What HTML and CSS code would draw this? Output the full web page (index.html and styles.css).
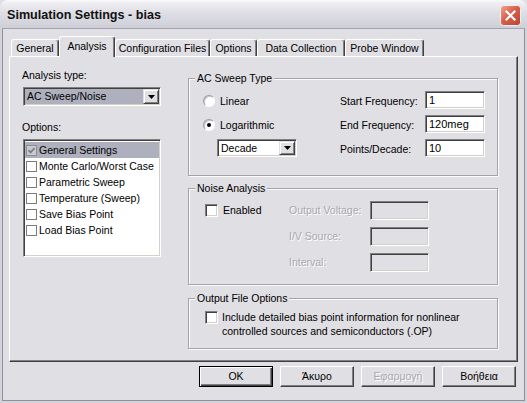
FILE: index.html
```html
<!DOCTYPE html>
<html>
<head>
<meta charset="utf-8">
<title>Simulation Settings - bias</title>
<link rel="stylesheet" href="styles.css">
</head>
<body>
<div class="window">
  <div class="titlebar">
    <span class="title">Simulation Settings - bias</span>
    <span class="close">
      <svg width="21" height="21" viewBox="0 0 21 21">
        <defs>
          <linearGradient id="cg" x1="0" y1="0" x2="1" y2="1">
            <stop offset="0" stop-color="#f2a696"/>
            <stop offset="0.45" stop-color="#d9604c"/>
            <stop offset="1" stop-color="#b9402e"/>
          </linearGradient>
        </defs>
        <rect x="0.5" y="0.5" width="20" height="20" rx="3" fill="url(#cg)" stroke="#f4f4f4"/>
        <path d="M6.5 6.5 L14.5 14.5 M14.5 6.5 L6.5 14.5" stroke="#fff" stroke-width="2.2" stroke-linecap="square"/>
      </svg>
    </span>
  </div>
  <div class="client">
    <div class="tabs">
      <div class="tab t-general">General</div>
      <div class="tab t-analysis active">Analysis</div>
      <div class="tab t-config">Configuration Files</div>
      <div class="tab t-options">Options</div>
      <div class="tab t-data">Data Collection</div>
      <div class="tab t-probe">Probe Window</div>
    </div>
    <div class="panel">
      <div class="left">
        <div class="label">Analysis type:</div>
        <div class="select analysis-select">
          <span class="select-text">AC Sweep/Noise</span>
          <span class="drop"><svg width="7" height="4" viewBox="0 0 7 4"><polygon points="0,0 7,0 3.5,4" fill="#000"/></svg></span>
        </div>
        <div class="label options-label">Options:</div>
        <div class="listbox">
          <div class="item selected"><span class="lcb checked"><svg width="9" height="9" viewBox="0 0 9 9"><path d="M1.5 4.2 L3.6 6.4 L7.6 2.2" fill="none" stroke="#7c7c8c" stroke-width="1.7"/></svg></span>General Settings</div>
          <div class="item"><span class="lcb"></span>Monte Carlo/Worst Case</div>
          <div class="item"><span class="lcb"></span>Parametric Sweep</div>
          <div class="item"><span class="lcb"></span>Temperature (Sweep)</div>
          <div class="item"><span class="lcb"></span>Save Bias Point</div>
          <div class="item"><span class="lcb"></span>Load Bias Point</div>
        </div>
      </div>
      <div class="right">
        <div class="group ac-group">
          <div class="group-title">AC Sweep Type</div>
          <div class="ac-grid">
            <div class="radio-row"><span class="radio"></span>Linear</div>
            <div class="flabel">Start Frequency:</div>
            <div class="input">1</div>
            <div class="radio-row"><span class="radio on"></span>Logarithmic</div>
            <div class="flabel">End Frequency:</div>
            <div class="input">120meg</div>
            <div class="select decade-select">
              <span class="select-text">Decade</span>
              <span class="drop"><svg width="7" height="4" viewBox="0 0 7 4"><polygon points="0,0 7,0 3.5,4" fill="#000"/></svg></span>
            </div>
            <div class="flabel">Points/Decade:</div>
            <div class="input">10</div>
          </div>
        </div>
        <div class="group noise-group">
          <div class="group-title">Noise Analysis</div>
          <div class="noise-grid">
            <div class="check-row"><span class="check"></span>Enabled</div>
            <div class="dlabel">Output Voltage:</div>
            <div class="input disabled"></div>
            <div></div>
            <div class="dlabel">I/V Source:</div>
            <div class="input disabled"></div>
            <div></div>
            <div class="dlabel">Interval:</div>
            <div class="input disabled"></div>
          </div>
        </div>
        <div class="group out-group">
          <div class="group-title">Output File Options</div>
          <div class="out-row">
            <span class="check"></span>
            <span class="out-text">Include detailed bias point information for nonlinear<br>controlled sources and semiconductors (.OP)</span>
          </div>
        </div>
      </div>
    </div>
    <div class="buttons">
      <div class="btn default"><span class="btn-inner">OK</span></div>
      <div class="btn"><span class="btn-inner">Άκυρο</span></div>
      <div class="btn"><span class="btn-inner btn-disabled">Εφαρμογή</span></div>
      <div class="btn"><span class="btn-inner">Βοήθεια</span></div>
    </div>
  </div>
</div>
</body>
</html>
```

FILE: styles.css
```css
html, body {
  margin: 0;
  padding: 0;
  background: #e0dfe3;
}

body {
  width: 527px;
  height: 403px;
  overflow: hidden;
  font-family: "Liberation Sans", Arial, sans-serif;
  font-size: 10.5px;
  line-height: 13px;
  color: #000;
}

.window {
  width: 527px;
  height: 403px;
  box-sizing: border-box;
  display: flex;
  flex-direction: column;
  background: #d3d3db;
  border-radius: 7px 7px 0 0;
  padding: 0 2px 2px 2px;
  overflow: hidden;
}

.titlebar {
  height: 28px;
  flex: none;
  margin: 0 -2px;
  box-sizing: border-box;
  padding: 2px 6px 0 7px;
  display: flex;
  align-items: center;
  justify-content: space-between;
  background: linear-gradient(#fbfbfc 0, #eeeef2 3px, #dedee5 45%, #cfcfd8 100%);
  border-radius: 7px 7px 0 0;
}

.title {
  font-weight: bold;
  font-size: 12.6px;
  color: #111;
}

.close {
  display: flex;
  width: 21px;
  height: 21px;
}

.client {
  flex: 1;
  background: #e0dfe3;
  border: 1px solid #8f8f9f;
  border-top-color: #a3a3b1;
  padding: 7px 6px 0 6px;
  display: flex;
  flex-direction: column;
}

/* Tabs */
.tabs {
  display: flex;
  align-items: flex-end;
  height: 20px;
  padding-left: 2px;
  flex: none;
}

.tab {
  height: 17px;
  box-sizing: border-box;
  border-top: 1px solid #fff;
  border-left: 1px solid #fff;
  border-right: 1px solid #404040;
  box-shadow: inset -1px 0 0 #808080;
  border-radius: 3px 3px 0 0;
  line-height: 16px;
  white-space: nowrap;
  text-align: center;
}

.t-general { width: 48px; }
.t-analysis { width: 56px; }
.t-config { width: 95px; }
.t-options { width: 47px; }
.t-data { width: 88px; }
.t-probe { width: 79px; }

.tab.active {
  height: 21px;
  margin-bottom: -1px;
  background: #e0dfe3;
  line-height: 18px;
  position: relative;
  z-index: 2;
}

/* Panel */
.panel {
  height: 306px;
  flex: none;
  box-sizing: border-box;
  border: 1px solid;
  border-color: #fff #404040 #404040 #fff;
  box-shadow: inset -1px -1px 0 #808080;
  padding: 12px 0 0 13px;
  display: grid;
  grid-template-columns: 138px 310px;
  column-gap: 27px;
  align-items: start;
}

.left {
  display: flex;
  flex-direction: column;
}

.label {
  margin-left: -1px;
  height: 13px;
}

.options-label {
  margin-top: 15px;
}

/* Select */
.select {
  display: flex;
  box-sizing: border-box;
  height: 19px;
  border: 1px solid;
  border-color: #808080 #fff #fff #808080;
  box-shadow: inset 1px 1px 0 #404040, inset -1px -1px 0 #d4d0c8;
  background: #fff;
  padding: 1px;
}

.analysis-select {
  margin-top: 5px;
  background: #afb0bd;
}

.select-text {
  flex: 1;
  padding-left: 2px;
  line-height: 15px;
}

.drop {
  width: 16px;
  box-sizing: border-box;
  background: #e0dfe3;
  border: 1px solid;
  border-color: #e0dfe3 #404040 #404040 #e0dfe3;
  box-shadow: inset 1px 1px 0 #fff, inset -1px -1px 0 #808080;
  display: flex;
  align-items: center;
  justify-content: center;
}

.decade-select {
  width: 80px;
  height: 18px;
  margin-left: 14px;
  align-self: center;
}

.decade-select .select-text {
  line-height: 14px;
}

/* Listbox */
.listbox {
  margin-top: 5px;
  height: 118px;
  box-sizing: border-box;
  border: 1px solid;
  border-color: #808080 #fff #fff #808080;
  box-shadow: inset 1px 1px 0 #404040, inset -1px -1px 0 #d4d0c8;
  background: #fff;
  padding: 2px 1px;
}

.item {
  height: 16px;
  display: flex;
  align-items: center;
  gap: 2px;
  white-space: nowrap;
  padding-left: 1px;
}

.item.selected {
  background: #afb0bd;
}

.lcb {
  width: 11px;
  height: 11px;
  box-sizing: border-box;
  border: 1px solid #7b7b7b;
  background: #fff;
  display: flex;
  align-items: center;
  justify-content: center;
  flex: none;
}

.lcb.checked {
  background: #c9c9d2;
  border-color: #8c8c98;
}

/* Group boxes */
.right {
  display: flex;
  flex-direction: column;
}

.group {
  box-sizing: border-box;
  border: 1px solid #a3a3ab;
  box-shadow: inset 1px 1px 0 #fbfbfb, 1px 1px 0 #fbfbfb;
}

.group-title {
  width: max-content;
  margin: -7px 0 0 6px;
  padding: 0 2px;
  background: #e0dfe3;
  height: 13px;
}

.ac-group {
  margin-top: 9px;
  height: 98px;
}

.ac-grid {
  margin: 3px 0 0 14px;
  display: grid;
  grid-template-columns: 137px 85px 60px;
  grid-auto-rows: 24px;
  align-items: center;
}

.radio-row {
  display: flex;
  align-items: center;
  gap: 5px;
  padding-top: 2px;
}

.radio {
  width: 12px;
  height: 12px;
  box-sizing: border-box;
  border-radius: 50%;
  border: 1px solid;
  border-color: #9a9aa2 #fff #fff #9a9aa2;
  box-shadow: inset 1px 1px 0 #c4c4cc;
  background: #fff;
  display: flex;
  align-items: center;
  justify-content: center;
}

.radio.on::after {
  content: "";
  width: 4px;
  height: 4px;
  border-radius: 50%;
  background: #000;
}

.flabel {
  padding-top: 3px;
}

.input {
  height: 18px;
  box-sizing: border-box;
  border: 1px solid;
  border-color: #808080 #fff #fff #808080;
  box-shadow: inset 1px 1px 0 #404040, inset -1px -1px 0 #d4d0c8;
  background: #fff;
  padding: 1px 3px;
  line-height: 15px;
  font-size: 11px;
}

.input.disabled {
  height: 19px;
  background: #e0dfe3;
}

.noise-group {
  margin-top: 12px;
  height: 97px;
}

.noise-grid {
  margin: 2px 0 0 16px;
  display: grid;
  grid-template-columns: 84px 81px 59px;
  grid-auto-rows: 26px;
  align-items: center;
}

.check-row {
  display: flex;
  align-items: center;
  gap: 5px;
}

.check {
  width: 13px;
  height: 13px;
  flex: none;
  box-sizing: border-box;
  border: 1px solid;
  border-color: #808080 #fff #fff #808080;
  box-shadow: inset 1px 1px 0 #404040, inset -1px -1px 0 #d4d0c8;
  background: #fff;
}

.dlabel {
  color: #a9a8ad;
  text-shadow: 1px 1px 0 #fff;
}

.out-group {
  margin-top: 13px;
  height: 51px;
}

.out-row {
  display: flex;
  align-items: flex-start;
  gap: 4px;
  margin: 6px 0 0 16px;
}

.out-text {
  line-height: 13.5px;
}

/* Buttons */
.buttons {
  display: flex;
  justify-content: flex-end;
  gap: 7px;
  margin-top: 4px;
  padding-right: 2px;
}

.btn {
  width: 74px;
  height: 21px;
  box-sizing: border-box;
  border: 1px solid;
  border-color: #fff #404040 #404040 #fff;
  box-shadow: inset -1px -1px 0 #808080;
  display: flex;
  align-items: center;
  justify-content: center;
}

.btn.default {
  border: 1px solid #000;
  box-shadow: inset 1px 1px 0 #fff, inset -1px -1px 0 #404040, inset -2px -2px 0 #808080;
}

.btn-inner {
  line-height: 13px;
}

.btn-disabled {
  color: #a9a8ad;
  text-shadow: 1px 1px 0 #fff;
}
```
